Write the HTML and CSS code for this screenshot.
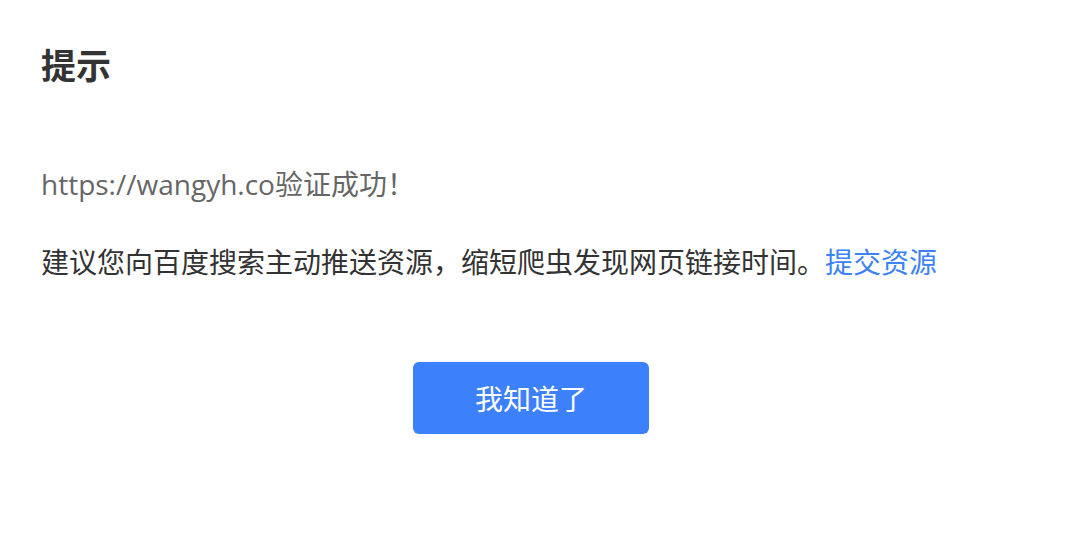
FILE: index.html
```html
<!DOCTYPE html>
<html lang="zh-CN">
<head>
  <meta charset="UTF-8">
  <title>提示</title>
  <link rel="stylesheet" href="styles.css">
</head>
<body>
  <div class="dialog">
    <h2 class="title">提示</h2>
    <div class="content">
      <p class="site">https://wangyh.co验证成功！</p>
      <p class="tip">建议您向百度搜索主动推送资源，缩短爬虫发现网页链接时间。<a href="#" class="link">提交资源</a></p>
    </div>
    <div class="actions">
      <button class="ok">我知道了</button>
    </div>
  </div>
</body>
</html>
```
FILE: styles.css
```css
body {
  margin: 0;
  background: #fff;
  font-family: "Segoe UI", "Open Sans", "Noto Sans CJK SC", sans-serif;
  color: #333;
}

.dialog {
  padding: 40px 49px 40px 41px;
}

.title {
  margin: 0;
  font-size: 35px;
  line-height: 52px;
  font-weight: bold;
  color: #333;
}

.content {
  margin-top: 72px;
  font-size: 28px;
  line-height: 40px;
}

.content p {
  margin: 0;
}

.site {
  color: #666;
}

.content .tip {
  margin-top: 38px;
  color: #333;
}

.link {
  color: #3b82f6;
  text-decoration: none;
}

.actions {
  display: flex;
  justify-content: center;
  margin-top: 80px;
}

.ok {
  width: 236px;
  height: 72px;
  border: none;
  border-radius: 6px;
  background: #3d80fc;
  color: white;
  font-family: inherit;
  font-size: 28px;
  cursor: pointer;
}
```
